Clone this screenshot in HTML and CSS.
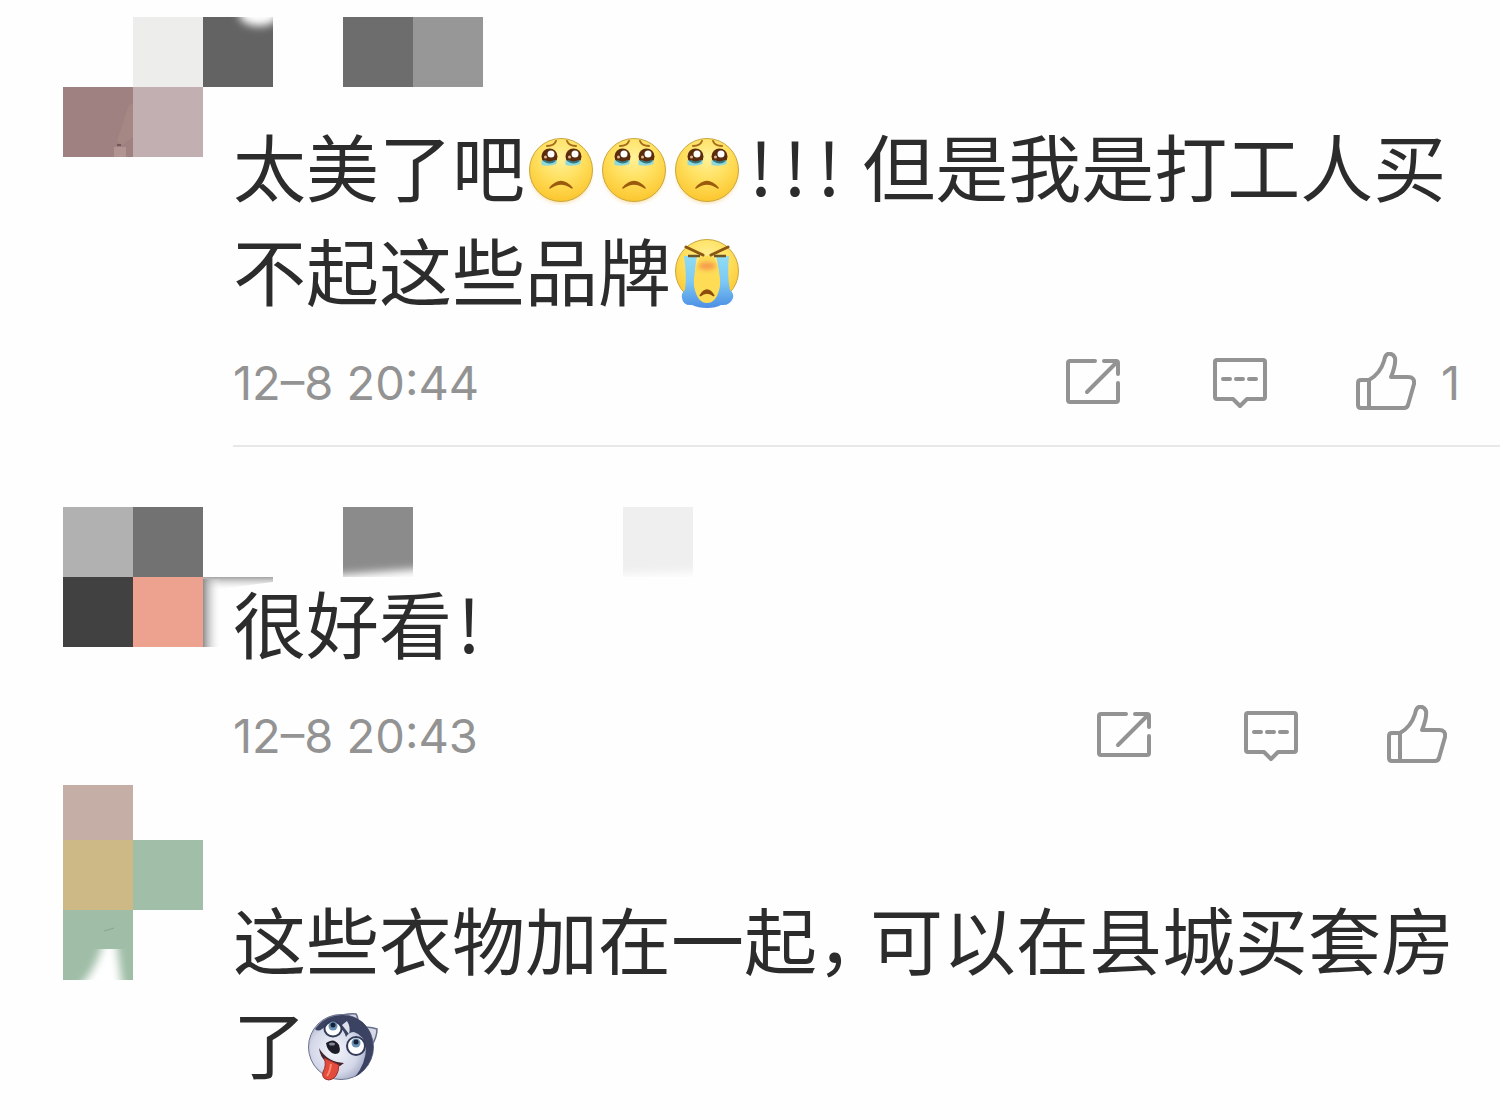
FILE: index.html
```html
<!DOCTYPE html>
<html lang="zh-CN">
<head>
    <meta charset="UTF-8">
    <meta name="viewport" content="width=device-width, initial-scale=1.0">
    <title>评论</title>
    <link rel="stylesheet" href="styles.css">
</head>
<body>
    <svg class="sprite" aria-hidden="true">
        <defs>
            <radialGradient id="faceFill" cx="50%" cy="30%" r="70%">
                <stop offset="0" stop-color="#fff29a"/>
                <stop offset="0.5" stop-color="#ffe060"/>
                <stop offset="1" stop-color="#fcc62e"/>
            </radialGradient>
            <linearGradient id="tearFill" x1="0" y1="0" x2="0" y2="1">
                <stop offset="0" stop-color="#8fdcf5"/>
                <stop offset="0.5" stop-color="#7cc8f4"/>
                <stop offset="1" stop-color="#4d8ee4"/>
            </linearGradient>
            <radialGradient id="furFill" cx="40%" cy="55%" r="60%">
                <stop offset="0" stop-color="#f4f5fc"/>
                <stop offset="0.6" stop-color="#d3d7e8"/>
                <stop offset="1" stop-color="#8f97b4"/>
            </radialGradient>
            <linearGradient id="fadeDown" x1="0" y1="0" x2="0" y2="1">
                <stop offset="0" stop-color="#8c8c8c" stop-opacity="0.8"/>
                <stop offset="1" stop-color="#fff" stop-opacity="0"/>
            </linearGradient>
            <linearGradient id="fadeRight">
                <stop offset="0" stop-color="#8c8c8c"/>
                <stop offset="1" stop-color="#fff" stop-opacity="0"/>
            </linearGradient>
            <filter id="soft" x="-50%" y="-50%" width="200%" height="200%">
                <feGaussianBlur stdDeviation="4"/>
            </filter>
            <filter id="blush" x="-50%" y="-50%" width="200%" height="200%">
                <feGaussianBlur stdDeviation="2"/>
            </filter>
        </defs>
        <symbol id="sad" viewBox="0 -3 65 70">
            <ellipse cx="32" cy="36" rx="30" ry="29" fill="#f5b93c" opacity="0.5" filter="url(#blush)"/>
            <circle cx="32" cy="32" r="31.5" fill="url(#faceFill)" stroke="#c9a73c"/>
            <path d="M18 8q7 0 9-5M38 3q2 5 9 5" fill="none" stroke="#a56c1c" stroke-width="2" stroke-linecap="round"/>
            <g id="wetEye">
                <circle cx="20.500" cy="18.500" r="8" fill="#5b2c0c"/>
                <path d="M12.500 22q8 4 15 0v4q-7 3-15 1z" fill="#8bd9dc"/>
                <path d="M15 22.500q6 4 11 0" fill="none" stroke="#367680" stroke-width="2"/>
                <circle cx="22" cy="16" r="3.500" fill="#fff"/>
                <circle cx="16.500" cy="19" r="1.500" fill="#e5b992"/>
            </g>
            <use href="#wetEye" x="24"/>
            <path d="M21 50q11-13 22 0-11-8-22 0z" fill="#9a5b0e" stroke="#9a5b0e" stroke-width="1.500" stroke-linejoin="round"/>
        </symbol>
        <symbol id="cry" viewBox="0 0 65 70">
            <circle cx="32" cy="32" r="31.500" fill="url(#faceFill)" stroke="#c9a73c"/>
            <path d="M9 17h13q-3 15-2 26 2 12 8 16l9 0q6-4 7-16 1-11-3-26h13q-2 20 1 34 4 3 3 8-3 8-12 7-5 3-14 3t-15-3q-9 1-10-7-1-5 3-8 2-14-1-34z" fill="url(#tearFill)"/>
            <path d="M25 18q7-3 14 0 7 14 6 29-3 17-13 17T19 47q-1-15 6-29z" fill="#fedc56"/>
            <ellipse cx="32" cy="27" rx="9" ry="4" fill="#f58d4c" opacity="0.8" filter="url(#blush)"/>
            <path d="M11 8l17 8M53 8l-17 8" stroke="#8b5712" stroke-width="3" stroke-linecap="round"/>
            <path d="M13 17h12M39 17h12" stroke="#6f5423" stroke-width="2.500"/>
            <path d="M25 57q7-12 14 0-7-6-14 0z" fill="#8b4d0e" stroke="#8b4d0e" stroke-width="1.500"/>
        </symbol>
        <symbol id="husky" viewBox="0 0 73 70">
            <path d="M28 6Q40 1 50 2q3 5 3 13zM56 16q7-2 15 1 0 8-5 16z" fill="#d6d8e5" stroke="#666d8c" stroke-width="1.500"/>
            <circle cx="35" cy="35" r="32.500" fill="url(#furFill)" stroke="#6b718c"/>
            <path d="M9 17Q19 3 37 3q19 1 27 17 6 15 1 27-5 12-16 18 11-14 11-29-2-13-12-16-5 0-8 5-2-7-7-10-10-4-17 2-4 3-7 0z" fill="#3b4262"/>
            <path d="M41 9q4 6 2 13l-7-9z" fill="#dfe2ed"/>
            <ellipse cx="27" cy="17" rx="8.500" ry="7.500" fill="#fff" stroke="#343b58" stroke-width="2"/>
            <circle cx="27" cy="14" r="4.500" fill="#6b91b5"/>
            <circle cx="27" cy="13" r="2.500" fill="#182238"/>
            <circle cx="50" cy="34" r="9" fill="#fff" stroke="#343b58" stroke-width="2"/>
            <circle cx="50" cy="31" r="4.500" fill="#6b91b5"/>
            <circle cx="50" cy="30" r="2.500" fill="#182238"/>
            <path d="M13 36q8 14 25 15l-4 3q-19-1-21-18z" fill="#41232c"/>
            <path d="M18 46q9 4 15 7-1 14-10 15-8-1-6-8 4-7 1-14z" fill="#e34c3c" stroke="#992f2c"/>
            <path d="M25 52q-1 8-4 12" fill="none" stroke="#ff8b72" stroke-width="2"/>
            <path d="M20 31q8-6 13 2 3 9-4 9-8-2-9-11z" fill="#1c1d29"/>
            <ellipse cx="26" cy="32" rx="3" ry="1.500" fill="#858899"/>
        </symbol>
        <symbol id="share" viewBox="0 0 60 60">
            <path d="M33 9H8q-2 0-2 2v37q0 2 2 2h46q2 0 2-2V31M42 9h12q2 0 2 2v11M54 11L25 40"/>
        </symbol>
        <symbol id="reply" viewBox="0 0 60 60">
            <path d="M8 8h46q2 0 2 2v35q0 2-2 2H38l-7 7-7-7H8q-2 0-2-2V10q0-2 2-2zM14 27h7M27 27h7M40 27h7"/>
        </symbol>
        <symbol id="like" viewBox="0 0 60 60">
            <path d="M13 28H5q-3 0-3 3v22q0 3 3 3h43q3 0 4-3l6-21q1-7-6-7H35q5-12 4-19-2-5-7-4-3 1-4 7-4 13-15 19zM13 28v28"/>
        </symbol>
    </svg>

    <main class="comments">
        <article class="comment first">
            <svg class="mosaic" viewBox="0 0 700 140" aria-hidden="true">
                <clipPath id="clipA"><path d="M140 0h70v70h-70z"/></clipPath>
                <path d="M70 0h70v70H70z" fill="#ededeb"/>
                <path d="M140 0h70v70h-70z" fill="#636363"/>
                <g clip-path="url(#clipA)"><ellipse cx="196" cy="-3" rx="20" ry="12" fill="#fff" filter="url(#soft)"/></g>
                <path d="M280 0h70v70h-70z" fill="#6d6d6d"/>
                <path d="M350 0h70v70h-70z" fill="#979797"/>
                <path d="M0 70h70v70H0z" fill="#9f8181"/>
                <path d="M70 70h70v70H70z" fill="#c2afb1"/>
                <path d="M66 88l4-2v34l-11 8-5-4z" fill="#ae9189" opacity="0.4"/>
                <path d="M51 130h12v10H51z" fill="#c2aaa6" opacity="0.5"/>
                <path d="M54 128h4" stroke="#73565c" stroke-width="2"/>
            </svg>
            <div class="body">
                <p class="text">太美了吧<svg class="emoji" role="img" aria-label="悲伤"><use href="#sad"/></svg><svg class="emoji" role="img" aria-label="悲伤"><use href="#sad"/></svg><svg class="emoji" role="img" aria-label="悲伤"><use href="#sad"/></svg><span class="mark">!</span><span class="mark">!</span><span class="mark">!</span> 但是我是打工人买不起这些品牌<svg class="emoji" role="img" aria-label="大哭"><use href="#cry"/></svg></p>
                <footer class="meta">
                    <time datetime="12-08T20:44">12–8 20:44</time>
                    <div class="actions">
                        <button type="button" aria-label="转发"><svg><use href="#share"/></svg></button>
                        <button type="button" aria-label="评论"><svg><use href="#reply"/></svg></button>
                        <button class="like" type="button" aria-label="赞 1"><svg><use href="#like"/></svg><span class="count">1</span></button>
                    </div>
                </footer>
            </div>
        </article>

        <article class="comment second">
            <svg class="mosaic" viewBox="0 0 700 140" aria-hidden="true">
                <clipPath id="clipB"><path d="M280 0h70v70h-70zM560 0h70v70h-70z"/></clipPath>
                <path d="M0 0h70v70H0z" fill="#b1b1b1"/>
                <path d="M70 0h70v70H70z" fill="#727272"/>
                <path d="M0 70h70v70H0z" fill="#414141"/>
                <path d="M70 70h70v70H70z" fill="#eca28f"/>
                <g clip-path="url(#clipB)">
                    <path d="M250-40h130v100l-130 10z" fill="#8b8b8b" filter="url(#soft)"/>
                    <path d="M530-40h130v104l-130 4z" fill="#efefef" filter="url(#soft)"/>
                </g>
                <path d="M140 70h70v5l-70 9z" fill="url(#fadeDown)"/>
                <path d="M140 72h18v68h-18z" fill="url(#fadeRight)"/>
            </svg>
            <div class="body">
                <p class="text">很好看<span class="mark">!</span></p>
                <footer class="meta">
                    <time datetime="12-08T20:43">12–8 20:43</time>
                    <div class="actions">
                        <button type="button" aria-label="转发"><svg><use href="#share"/></svg></button>
                        <button type="button" aria-label="评论"><svg><use href="#reply"/></svg></button>
                        <button class="like" type="button" aria-label="赞"><svg><use href="#like"/></svg><span></span></button>
                    </div>
                </footer>
            </div>
        </article>

        <article class="comment third">
            <svg class="mosaic" viewBox="0 0 700 195" aria-hidden="true">
                <clipPath id="clipC"><path d="M0 164h70v31H0z"/></clipPath>
                <path d="M0 0h70v55H0z" fill="#c5aea6"/>
                <path d="M0 55h70v70H0z" fill="#ccb986"/>
                <path d="M70 55h70v70H70z" fill="#a0bea8"/>
                <path d="M0 125h70v70H0z" fill="#9fbda7"/>
                <path d="M41 146l10-3" stroke="#86a78f" stroke-width="1"/>
                <g clip-path="url(#clipC)"><path d="M43 148h9l8 60H10q24-20 33-60z" fill="#fff" filter="url(#soft)"/></g>
            </svg>
            <div class="body">
                <p class="text">这些衣物加在一起<span class="comma">，</span>可以在县城买套房了<svg class="emoji wide" role="img" aria-label="哈士奇"><use href="#husky"/></svg></p>
            </div>
        </article>
    </main>
</body>
</html>
```
FILE: styles.css
```css
* {
    box-sizing: border-box;
}
body {
    margin: 0;
    background-color: #fefefe;
    color: #2c2c2c;
    font-family: "Noto Sans CJK SC", sans-serif;
}
.sprite {
    display: block;
    width: 0;
    height: 0;
}
.comments {
    padding: 17px 0 16px 63px;
}
.comment {
    display: grid;
    grid-template-columns: 170px 1fr;
}
/* the mosaic runs behind both columns */
.mosaic {
    grid-area: 1 / 1 / 2 / 3;
    width: 700px;
    max-width: 100%;
}
.body {
    grid-area: 1 / 2 / 2 / 3;
}
.first .body {
    padding: 95px 0 30px;
    border-bottom: 2px solid #e8e8e8;
}
.second {
    margin-top: 60px;
}
.second .body {
    padding-top: 62px;
}
.third {
    margin-top: 17px;
}
.third .body {
    padding-top: 100px;
}
.text {
    margin: 0;
    padding-right: 30px;
    font-size: 73px;
    line-height: 104px;
}
.emoji {
    width: 65px;
    height: 70px;
    margin: 0 4px;
    vertical-align: -9px;
}
.emoji.wide {
    width: 73px;
    margin: 0;
}
.mark {
    display: inline-block;
    width: 34px;
    text-align: center;
}
.comma {
    display: inline-block;
    width: 53px;
}
.meta {
    display: flex;
    align-items: center;
    justify-content: space-between;
    height: 66px;
    margin-top: 29px;
    padding-right: 40px;
    color: #939393;
    font-family: Inter, sans-serif;
    font-size: 47px;
}
.actions {
    display: flex;
    gap: 87px;
}
button {
    display: flex;
    align-items: center;
    padding: 0;
    border: none;
    background: none;
    color: inherit;
    font: inherit;
    cursor: pointer;
}
button svg {
    width: 60px;
    height: 60px;
    fill: none;
    stroke: #939393;
    stroke-width: 4;
    stroke-linecap: round;
    stroke-linejoin: round;
}
.like {
    gap: 13px;
}
.count {
    width: 31px;
    text-align: right;
}
```
